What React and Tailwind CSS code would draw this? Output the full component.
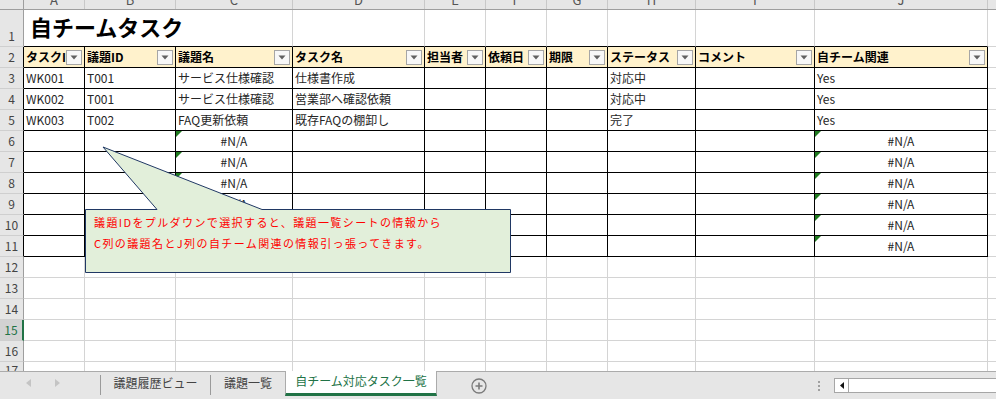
import React from "react";

const COLS = [
  { key: "A", w: "w-[61px]" },
  { key: "B", w: "w-[91px]" },
  { key: "C", w: "w-[117px]" },
  { key: "D", w: "w-[132px]" },
  { key: "E", w: "w-[61px]" },
  { key: "F", w: "w-[61px]" },
  { key: "G", w: "w-[61px]" },
  { key: "H", w: "w-[88px]" },
  { key: "I", w: "w-[119px]" },
  { key: "J", w: "w-[173px]" },
];

const HEADERS = ["タスクID", "議題ID", "議題名", "タスク名", "担当者", "依頼日", "期限", "ステータス", "コメント", "自チーム関連"];

const DATA = [
  ["WK001", "T001", "サービス仕様確認", "仕様書作成", "", "", "", "対応中", "", "Yes"],
  ["WK002", "T001", "サービス仕様確認", "営業部へ確認依頼", "", "", "", "対応中", "", "Yes"],
  ["WK003", "T002", "FAQ更新依頼", "既存FAQの棚卸し", "", "", "", "完了", "", "Yes"],
];

function RowHead({ n, dark, selected, tall }) {
  return (
    <div
      className={`w-[24px] shrink-0 h-full flex justify-center ${tall ? "items-end" : "items-center"} border-b border-[#cfcfcf] text-[12px] leading-[20px] ${
        selected
          ? "bg-[#d2d2d2] text-[#217346] border-r-2 border-r-[#217346]"
          : dark
          ? "bg-[#e6e6e6] text-[#444] border-r border-r-black"
          : "bg-[#e6e6e6] text-[#444] border-r border-r-[#9e9e9e]"
      }`}
    >
      {n}
    </div>
  );
}

function FilterButton() {
  return (
    <div className="shrink-0 ml-auto mr-[2px] w-[16px] h-[15px] border border-[#a6a6a6] bg-[#f7f7f7] flex items-center justify-center">
      <svg width="8" height="5" viewBox="0 0 8 5">
        <polygon points="0.5,0.5 7.5,0.5 4,4.5" fill="#606060" />
      </svg>
    </div>
  );
}

function ErrorMark() {
  return (
    <svg className="absolute left-0 top-0" width="6" height="6" viewBox="0 0 6 6">
      <polygon points="0,0 6,0 0,6" fill="#1f7a1f" />
    </svg>
  );
}

function BlankCells({ black }) {
  return (
    <>
      {COLS.map((c) => (
        <div key={c.key} className={`${c.w} shrink-0 h-full border-r border-b ${black ? "border-black" : "border-[#d4d4d4]"}`} />
      ))}
      <div className="flex-1 h-full border-b border-[#d4d4d4]" />
    </>
  );
}

export default function App() {
  return (
    <div className="w-[996px] h-[399px] overflow-hidden bg-white relative font-['Noto_Sans_CJK_JP','Noto_Sans',sans-serif] text-[#222]">
      {/* column headers (scrolled, letters cut off) */}
      <div className="flex h-[10px] bg-[#e6e6e6] border-b border-[#9e9e9e] overflow-hidden">
        <div className="w-[24px] shrink-0 border-r border-[#9e9e9e]" />
        {COLS.map((c) => (
          <div key={c.key} className={`${c.w} shrink-0 border-r border-[#c8c8c8] flex justify-center text-[13px] leading-[13px] text-[#555]`}>
            <span className="-mt-[7px]">{c.key}</span>
          </div>
        ))}
        <div className="flex-1" />
      </div>

      {/* row 1 - title */}
      <div className="flex h-[37px]">
        <RowHead n="1" tall />
        <div className="w-[269px] shrink-0 h-full border-r border-b border-r-[#d4d4d4] border-b-black flex items-end pl-[6px] pb-[9px]">
          <span className="text-[22px] leading-[22px] font-bold text-black whitespace-nowrap">自チームタスク</span>
        </div>
        {COLS.slice(3).map((c) => (
          <div key={c.key} className={`${c.w} shrink-0 h-full border-r border-b border-r-[#d4d4d4] border-b-black`} />
        ))}
        <div className="flex-1 h-full border-b border-[#d4d4d4]" />
      </div>

      {/* row 2 - table header */}
      <div className="flex h-[21px]">
        <RowHead n="2" dark />
        {COLS.map((c, i) => (
          <div key={c.key} className={`${c.w} shrink-0 h-full border-r border-b border-black bg-[#fff2cc] flex items-center pl-[2px] overflow-hidden`}>
            <span className="min-w-0 overflow-hidden whitespace-nowrap text-[12px] font-bold text-black">{HEADERS[i]}</span>
            <FilterButton />
          </div>
        ))}
        <div className="flex-1 h-full border-b border-[#d4d4d4]" />
      </div>

      {/* rows 3-5 - data */}
      {DATA.map((row, r) => (
        <div key={r} className="flex h-[21px]">
          <RowHead n={r + 3} dark />
          {COLS.map((c, i) => (
            <div key={c.key} className={`${c.w} shrink-0 h-full border-r border-b border-black flex items-center pl-[2px] overflow-hidden`}>
              <span className="whitespace-nowrap text-[12px] text-[#262626]">{row[i]}</span>
            </div>
          ))}
          <div className="flex-1 h-full border-b border-[#d4d4d4]" />
        </div>
      ))}

      {/* rows 6-11 - lookup formulas */}
      {[6, 7, 8, 9, 10, 11].map((n) => (
        <div key={n} className="flex h-[21px]">
          <RowHead n={n} dark />
          {COLS.map((c) => (
            <div key={c.key} className={`${c.w} shrink-0 h-full border-r border-b border-black flex items-center justify-center relative`}>
              {(c.key === "C" || c.key === "J") && (
                <>
                  <ErrorMark />
                  <span className="text-[12px] text-[#262626]">#N/A</span>
                </>
              )}
            </div>
          ))}
          <div className="flex-1 h-full border-b border-[#d4d4d4]" />
        </div>
      ))}

      {/* rows 12-16 - empty */}
      {[12, 13, 14, 15, 16].map((n) => (
        <div key={n} className="flex h-[21px]">
          <RowHead n={n} selected={n === 15} />
          <BlankCells />
        </div>
      ))}

      {/* row 17 - partially visible */}
      <div className="flex h-[9px] overflow-hidden">
        <div className="w-[24px] shrink-0 h-full bg-[#e6e6e6] border-r border-[#9e9e9e] flex justify-center text-[12px] leading-[16px] text-[#444]">17</div>
        {COLS.map((c) => (
          <div key={c.key} className={`${c.w} shrink-0 h-full border-r border-[#d4d4d4]`} />
        ))}
        <div className="flex-1" />
      </div>

      {/* comment callout */}
      <svg className="absolute left-0 top-0 pointer-events-none" width="996" height="371" viewBox="0 0 996 371">
        <path
          d="M85.5,209.5 L157,209.5 L103,147 L262,209.5 L510.5,209.5 L510.5,272.5 L85.5,272.5 Z"
          fill="#e2efda"
          stroke="#203864"
          strokeWidth="1"
        />
      </svg>
      <div className="absolute left-[94px] top-[212px] text-[11px] leading-[21px] tracking-[1.4px] text-[#ff0000] whitespace-nowrap">
        <div>議題IDをプルダウンで選択すると、議題一覧シートの情報から</div>
        <div>C列の議題名とJ列の自チーム関連の情報引っ張ってきます。</div>
      </div>

      {/* sheet tab bar */}
      <div className="h-[28px] bg-[#e6e6e6] border-t border-[#ababab] flex items-start text-[12px] text-[#444]">
        <div className="w-[100px] shrink-0 h-[22px] flex items-center pl-[26px] gap-[24px]">
          <svg width="5" height="8" viewBox="0 0 5 8"><polygon points="5,0 5,8 0,4" fill="#c4c4c4" /></svg>
          <svg width="5" height="8" viewBox="0 0 5 8"><polygon points="0,0 0,8 5,4" fill="#c4c4c4" /></svg>
        </div>
        <div className="w-px h-[20px] mt-[3px] bg-[#9a9a9a] shrink-0" />
        <div className="w-[109px] shrink-0 h-[22px] flex items-center justify-center">議題履歴ビュー</div>
        <div className="w-px h-[20px] mt-[3px] bg-[#9a9a9a] shrink-0" />
        <div className="w-[74px] shrink-0 h-[22px] flex items-center justify-center">議題一覧</div>
        <div className="w-[152px] shrink-0 h-[25px] -mt-px bg-white border-x border-[#ababab] border-b-[3px] border-b-[#217346] flex items-center justify-center text-[#217346]">
          <span className="-mt-[2px]">自チーム対応タスク一覧</span>
        </div>
        <div className="ml-[34px] mt-[6px] shrink-0">
          <svg width="16" height="16" viewBox="0 0 16 16">
            <circle cx="8" cy="8" r="7" fill="none" stroke="#7a7a7a" strokeWidth="1.3" />
            <path d="M8 4.5 V11.5 M4.5 8 H11.5" stroke="#7a7a7a" strokeWidth="1.6" />
          </svg>
        </div>
        <div className="ml-[331px] mt-[9px] shrink-0 flex flex-col gap-[2px]">
          <div className="w-[2px] h-[2px] bg-[#a0a0a0]" />
          <div className="w-[2px] h-[2px] bg-[#a0a0a0]" />
          <div className="w-[2px] h-[2px] bg-[#a0a0a0]" />
        </div>
        <div className="ml-[14px] mt-[6px] flex-1 h-[15px] bg-white border-y border-l border-[#a6a6a6] flex">
          <div className="w-[14px] h-full border-r border-[#a6a6a6] flex items-center justify-center">
            <svg width="4" height="7" viewBox="0 0 4 7"><polygon points="4,0 4,7 0,3.5" fill="#111" /></svg>
          </div>
        </div>
      </div>
    </div>
  );
}
